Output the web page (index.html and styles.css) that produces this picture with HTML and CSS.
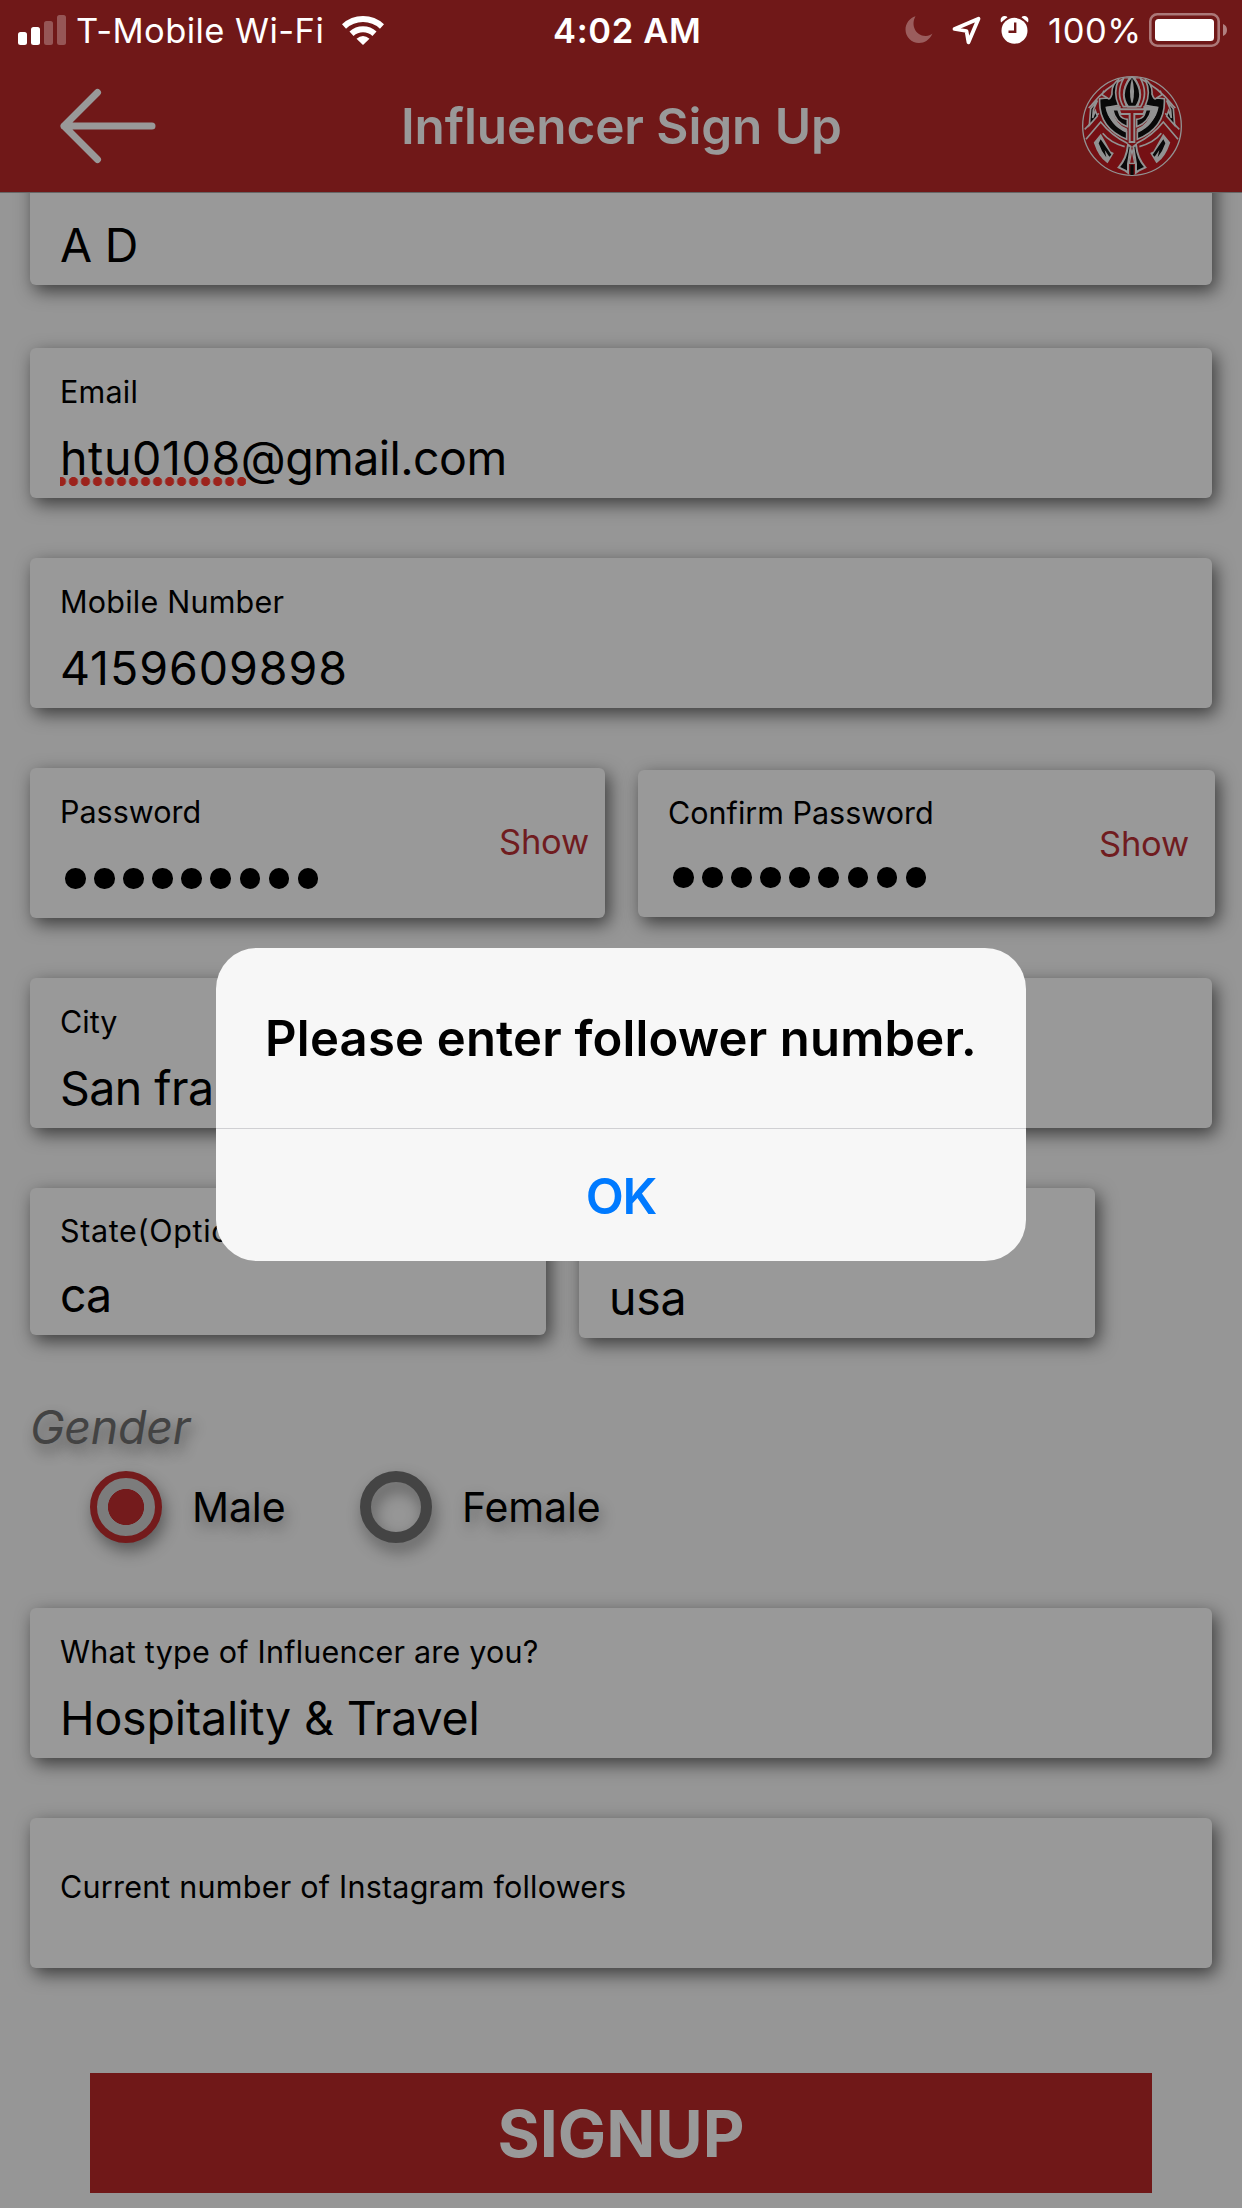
FILE: index.html
```html
<!DOCTYPE html>
<html lang="en">
<head>
<meta charset="utf-8">
<title>Influencer Sign Up</title>
<link rel="stylesheet" href="styles.css">
</head>
<body>
<header class="header">
  <div class="status">
    <div class="status-group status-left">
      <svg class="signal" width="48" height="60" viewBox="18 0 48 60" fill="#fff">
        <rect x="18" y="32" width="9" height="13" rx="2.5"/>
        <rect x="31" y="27" width="9" height="18" rx="2.5"/>
        <rect x="44" y="21" width="9" height="24" rx="2.5" opacity=".27"/>
        <rect x="57" y="15" width="9" height="30" rx="2.5" opacity=".27"/>
      </svg>
      <span class="carrier">T-Mobile Wi-Fi</span>
      <svg width="42" height="60" viewBox="342 0 42 60" fill="none" stroke="#fff">
        <path d="M344 26.500A28 28 0 0 1 382 26.500" stroke-width="6"/>
        <path d="M351.500 33.800A17 17 0 0 1 374.500 33.800" stroke-width="6"/>
        <path d="M363 45L356.500 38.800Q363 33 369.500 38.800Z" fill="#fff" stroke="none"/>
      </svg>
    </div>
    <div class="clock">4:02 AM</div>
    <div class="status-group">
      <svg width="28" height="60" viewBox="905.500 0 28 60"><path d="M916 16.200C911 25 916 35.500 926 36C929 36.100 931 35 933 33.500C930 40 925 43 919.500 43C912 43 906 37 906 29.500C906 23.500 910 18 916 16.200Z" fill="#fff" opacity=".3"/></svg>
      <svg class="locate" width="29" height="60" viewBox="952 0 29 60"><path d="M954.500 29L978.500 18.700L968.500 42.300L966.500 31Z" fill="none" stroke="#fff" stroke-width="3.800" stroke-linejoin="round"/></svg>
      <svg class="alarm" width="29" height="60" viewBox="1000.500 0 29 60">
        <circle cx="1015" cy="30.800" r="13" fill="#fff"/>
        <path d="M1001.500 22.500Q1000 17 1004.500 16Q1007 15.800 1008 17.300Z M1028.500 22.500Q1030 17 1025.500 16Q1023 15.800 1022 17.300Z" fill="#fff"/>
        <path d="M1015.700 22.500V31.700H1009" fill="none" stroke="#701818" stroke-width="2.400"/>
      </svg>
      <span class="charge">100%</span>
      <svg width="80" height="60" viewBox="1149 0 80 60">
        <rect x="1150.300" y="14.300" width="68.400" height="31.400" rx="7" fill="none" stroke="#fff" stroke-width="2.600" opacity=".42"/>
        <rect x="1155" y="19" width="59" height="22" rx="3.500" fill="#fff"/>
        <path d="M1223 24Q1227 25.500 1227 30T1223 36Z" fill="#fff" opacity=".45"/>
      </svg>
    </div>
  </div>
  <div class="nav">
    <svg class="back" width="96" height="132" viewBox="60 60 96 132" fill="none" stroke="#999" stroke-width="7" stroke-linecap="round" stroke-linejoin="round"><path d="M152 126H64M97.500 92.500L64 126L97.500 159.500"/></svg>
    <h1 class="title">Influencer Sign Up</h1>
    <svg class="logo" width="100" height="100" viewBox="0 0 300 300">
      <defs>
        <clipPath id="disc"><circle cx="150" cy="150" r="147"/></clipPath>
        <g id="half" stroke="#929292" stroke-width="5">
          <path d="M12 190L56 138Q88 178 136 202M8 160Q24 146 50 112M62 172Q84 200 128 212M28 88Q70 34 130 5M66 44L60 56L76 66M20 96L46 70" fill="none"/>
          <path d="M126 5Q100 50 124 92H134Q115 45 144 4Z" fill="#7b1115"/>
          <path d="M110 10Q88 25 90 54Q84 74 76 66L53 68Q48 156 134 190V168Q84 146 76 94L110 88Q92 50 110 10Z" fill="#080808"/>
          <path d="M70 92Q78 142 136 168V158Q100 146 92 102L116 100V90Z" fill="#929292" stroke="none"/>
          <path d="M92 101L108 101L114 118Q120 128 136 130V152Q100 140 92 101Z" fill="#080808"/>
          <path d="M46 74L26 98L22 148L46 120L40 104L32 126L34 102Z" fill="#080808" stroke-width="5"/>
          <path d="M56 178L38 200Q52 242 76 258L92 232L84 228Z" fill="#929292"/>
          <path d="M56 190L88 236L82 242L68 222L73 244Q58 226 50 202Z" fill="#080808" stroke="none"/>
          <path d="M138 206Q134 248 110 274L130 284L138 290L138 264L146 212Z" fill="#080808" stroke-width="6"/>
        </g>
      </defs>
      <circle cx="150" cy="150" r="148" fill="#751014" stroke="#929292" stroke-width="4"/>
      <g clip-path="url(#disc)">
        <use href="#half"/>
        <use href="#half" transform="matrix(-1 0 0 1 300 0)"/>
        <path d="M150 0Q108 50 138 92H162Q192 50 150 0Z" fill="#080808" stroke="#929292" stroke-width="6"/>
        <path d="M150 6Q139 45 148 80H152Q161 45 150 6Z" fill="#929292"/>
        <path d="M110 100H190L184 114H157V198H143V114H116Z" fill="#7b1115" stroke="#929292" stroke-width="6"/>
        <path d="M150 220L158 262H142Z" fill="#7b1115" stroke="#929292" stroke-width="4"/>
        <path d="M150 266V300" stroke="#080808" stroke-width="10"/>
      </g>
    </svg>
  </div>
</header>

<main class="form">
  <div class="field field-name"><div class="value value-tight">A D</div></div>
  <div class="field"><div class="label label-wide">Email</div><div class="value"><span class="misspelled">htu0108</span><span class="domain">@gmail.com</span></div></div>
  <div class="field"><div class="label label-wide">Mobile Number</div><div class="value digits">4159609898</div></div>
  <div class="row">
    <div class="field password">
      <div><div class="label">Password</div><div class="dots"><i></i><i></i><i></i><i></i><i></i><i></i><i></i><i></i><i></i></div></div>
      <span class="show">Show</span>
    </div>
    <div class="field password confirm">
      <div><div class="label">Confirm Password</div><div class="dots"><i></i><i></i><i></i><i></i><i></i><i></i><i></i><i></i><i></i></div></div>
      <span class="show">Show</span>
    </div>
  </div>
  <div class="field"><div class="label">City</div><div class="value value-tight">San fra</div></div>
  <div class="row">
    <div class="field region state"><div class="label">State(Optio</div><div class="value value-tight">ca</div></div>
    <div class="field region country"><div class="value">usa</div></div>
  </div>
  <div class="gender">Gender</div>
  <div class="radios">
    <span class="radio checked"></span><span class="option male">Male</span>
    <span class="radio"></span><span class="option">Female</span>
  </div>
  <div class="field"><div class="label label-wide">What type of Influencer are you?</div><div class="value value-type">Hospitality &amp; Travel</div></div>
  <div class="field field-empty"><div class="label label-wide">Current number of Instagram followers</div></div>
  <button class="signup">SIGNUP</button>
</main>

<div class="alert">
  <div class="alert-title">Please enter follower number.</div>
  <div class="alert-ok">OK</div>
</div>
</body>
</html>
```
FILE: styles.css
```css
* { box-sizing: border-box; }
body {
  position: relative;
  margin: 0;
  width: 1242px;
  height: 2208px;
  overflow: hidden;
  background: #969696;
  color: #000;
  font-family: Inter, "Liberation Sans", sans-serif;
  white-space: nowrap;
}
svg { display: block; flex: none; }

/* header */
.header { height: 192px; background: #701818; }
.status {
  display: grid;
  grid-template-columns: 553px 352px 1fr;
  height: 60px;
  color: #fff;
  font-size: 34.5px;
  line-height: 62px;
}
.status-group { display: flex; }
.status-left { padding-left: 18px; }
.carrier { width: 276px; padding-left: 10px; letter-spacing: .44px; }
.clock { font-weight: 600; letter-spacing: .66px; }
.locate { margin-left: 19px; }
.alarm { margin-left: 19px; }
.charge { width: 120px; padding-left: 19px; letter-spacing: .6px; }
.nav {
  display: grid;
  grid-template-columns: 341px 441px 340px;
  align-items: center;
  height: 132px;
  padding: 0 60px;
}
.title {
  margin: 0;
  color: #999;
  font-size: 49.5px;
  font-weight: 600;
  line-height: 132px;
  letter-spacing: -.09px;
}
.logo { justify-self: end; }

/* form */
.form {
  height: 2016px;
  padding: 0 30px;
  overflow: hidden;
  border-top: 1px solid #666;
}
.field {
  height: 150px;
  margin-bottom: 60px;
  padding: 24px 0 0 30px;
  border-radius: 6px;
  background: #999;
  box-shadow: 4px 6px 18px rgba(0, 0, 0, .6);
}
.field-name { margin: -58px 0 63px; padding-top: 80px; }
.field-empty { margin-bottom: 105px; padding-top: 49px; }
.label { font-size: 30.5px; line-height: 40px; }
.label-wide { letter-spacing: .22px; }
.value { margin-top: 16px; font-size: 46.5px; line-height: 60px; letter-spacing: -.05px; }
.field-name .value { margin-top: 0; }
.value-tight { letter-spacing: -.55px; }
.field-name .value-tight { letter-spacing: -.2px; }
.value-type { letter-spacing: -.18px; }
.digits { letter-spacing: .95px; }
.misspelled { position: relative; letter-spacing: .6px; }
.misspelled::after {
  content: "";
  position: absolute;
  left: 0;
  bottom: 0;
  width: 186px;
  height: 9px;
  background: radial-gradient(circle, #9c231c 4.2px, transparent 4.9px) -4.6px 0 / 12.02px 9px repeat-x;
}
.domain { letter-spacing: -.55px; }
.row { display: flex; align-items: flex-start; gap: 33px; height: 210px; }
.password { display: flex; flex: none; justify-content: space-between; width: 575px; padding-right: 16px; }
.confirm { width: 577px; height: 147px; margin-top: 2px; padding: 23px 26px 0 30px; }
.dots { display: flex; gap: 8.6px; margin: 36px 0 0 5px; }
.confirm .dots { margin-top: 34px; }
.dots i { width: 20.5px; height: 20.5px; border-radius: 50%; background: #000; }
.show { margin-top: 30px; color: #701c1f; font-size: 34.5px; line-height: 40px; letter-spacing: -.2px; }
.confirm .show { margin-top: 31px; }
.region { width: 516px; }
.state { height: 147px; padding-top: 23px; }
.state .label { letter-spacing: .64px; }
.state .value { margin-top: 14px; letter-spacing: -1px; }
.country { padding-top: 80px; }
.country .value { margin-top: 0; letter-spacing: -.3px; }
.gender {
  height: 73px;
  color: #434343;
  font-size: 46.5px;
  font-style: italic;
  line-height: 58px;
  letter-spacing: -.3px;
  text-shadow: 3px 8px 14px rgba(0, 0, 0, .45);
}
.radios { display: flex; align-items: center; height: 72px; margin-bottom: 65px; padding-left: 60px; }
.radio {
  width: 72px;
  height: 72px;
  border: 11px solid #444;
  border-radius: 50%;
  filter: drop-shadow(3px 8px 8px rgba(0, 0, 0, .4));
}
.radio.checked { border: 7px solid #741b1c; background: radial-gradient(circle, #741b1c 17.7px, #7c7c7c 18.4px); }
.option {
  margin-left: 30px;
  font-size: 41px;
  line-height: 72px;
  letter-spacing: -.1px;
  text-shadow: 3px 7px 14px rgba(0, 0, 0, .35);
}
.male { width: 168px; }
.signup {
  display: block;
  width: 1062px;
  height: 120px;
  margin: 0 0 0 60px;
  padding: 1px 0 0;
  border: 0;
  background: #701818;
  color: #999;
  font: 700 64.5px/120px Inter, "Liberation Sans", sans-serif;
}

/* dialog */
.alert {
  position: absolute;
  left: 216px;
  top: 948px;
  width: 810px;
  height: 313px;
  border-radius: 41px;
  background: #f7f7f7;
  text-align: center;
  font-weight: 600;
}
.alert-title {
  height: 181px;
  border-bottom: 1px solid #d0d0d3;
  font-size: 49px;
  line-height: 181px;
  letter-spacing: .2px;
}
.alert-ok { color: #007aff; font-size: 49.5px; line-height: 134px; letter-spacing: -1.2px; }
```
